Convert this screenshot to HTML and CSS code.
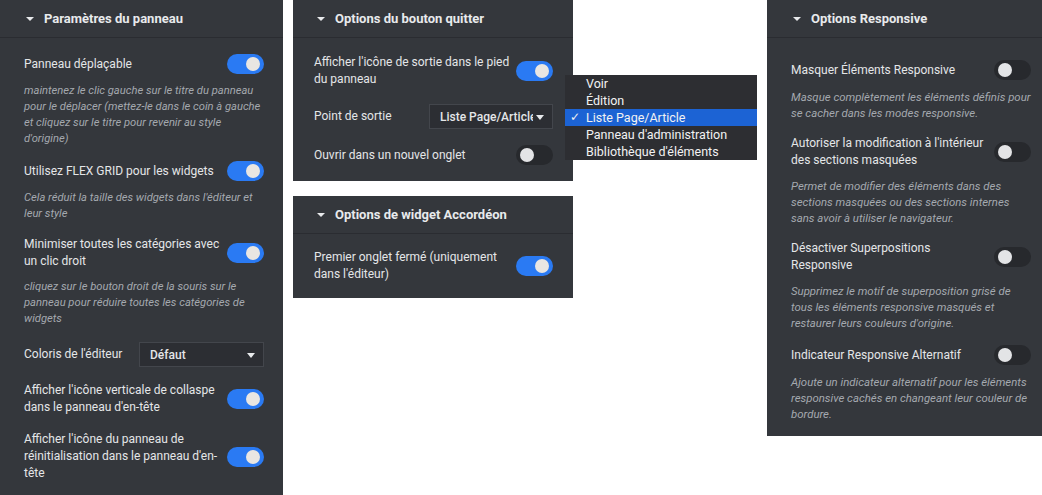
FILE: index.html
```html
<!DOCTYPE html>
<html lang="fr">
  <head>
    <meta charset="UTF-8" />
    <meta name="viewport" content="width=device-width, initial-scale=1.0" />
    <title>Réglages de l'éditeur</title>
    <link rel="stylesheet" href="styles.css">
  </head>
  <body>
    <div class="Board">
      <section class="Panel Panel--main">
        <header class="PanelHead"><span class="Caret"></span>Paramètres du panneau</header>
        <div class="PanelBody">
          <div class="Field">
            <div class="FieldRow">
              <span class="FieldLabel">Panneau déplaçable</span>
              <span class="Switch is-on"></span>
            </div>
            <p class="FieldDesc">maintenez le clic gauche sur le titre du panneau pour le déplacer (mettez-le dans le coin à gauche et cliquez sur le titre pour revenir au style d'origine)</p>
          </div>
          <div class="Field">
            <div class="FieldRow">
              <span class="FieldLabel">Utilisez FLEX GRID pour les widgets</span>
              <span class="Switch is-on"></span>
            </div>
            <p class="FieldDesc">Cela réduit la taille des widgets dans l'éditeur et leur style</p>
          </div>
          <div class="Field">
            <div class="FieldRow">
              <span class="FieldLabel">Minimiser toutes les catégories avec un clic droit</span>
              <span class="Switch is-on"></span>
            </div>
            <p class="FieldDesc">cliquez sur le bouton droit de la souris sur le panneau pour réduire toutes les catégories de widgets</p>
          </div>
          <div class="Field">
            <div class="FieldRow">
              <span class="FieldLabel">Coloris de l'éditeur</span>
              <span class="Select Select--wide"><span class="SelectValue">Défaut</span></span>
            </div>
          </div>
          <div class="Field">
            <div class="FieldRow">
              <span class="FieldLabel">Afficher l'icône verticale de collaspe dans le panneau d'en-tête</span>
              <span class="Switch is-on"></span>
            </div>
          </div>
          <div class="Field">
            <div class="FieldRow">
              <span class="FieldLabel">Afficher l'icône du panneau de réinitialisation dans le panneau d'en-tête</span>
              <span class="Switch is-on"></span>
            </div>
          </div>
        </div>
      </section>

      <div class="Stack">
        <section class="Panel Panel--mid">
          <header class="PanelHead"><span class="Caret"></span>Options du bouton quitter</header>
          <div class="PanelBody">
            <div class="Field">
              <div class="FieldRow">
                <span class="FieldLabel">Afficher l'icône de sortie dans le pied du panneau</span>
                <span class="Switch is-on"></span>
              </div>
            </div>
            <div class="Field">
              <div class="FieldRow">
                <span class="FieldLabel">Point de sortie</span>
                <span class="Select"><span class="SelectValue">Liste Page/Article</span></span>
              </div>
            </div>
            <div class="Field">
              <div class="FieldRow">
                <span class="FieldLabel">Ouvrir dans un nouvel onglet</span>
                <span class="Switch"></span>
              </div>
            </div>
          </div>
        </section>

        <section class="Panel Panel--mid Panel--short">
          <header class="PanelHead"><span class="Caret"></span>Options de widget Accordéon</header>
          <div class="PanelBody">
            <div class="Field">
              <div class="FieldRow">
                <span class="FieldLabel">Premier onglet fermé (uniquement dans l'éditeur)</span>
                <span class="Switch is-on"></span>
              </div>
            </div>
          </div>
        </section>

        <!-- open menu of the "Point de sortie" select -->
        <ul class="Menu">
          <li>Voir</li>
          <li>Édition</li>
          <li class="is-checked">Liste Page/Article</li>
          <li>Panneau d'administration</li>
          <li>Bibliothèque d'éléments</li>
        </ul>
      </div>

      <section class="Panel Panel--side">
        <header class="PanelHead"><span class="Caret"></span>Options Responsive</header>
        <div class="PanelBody">
          <div class="Field">
            <div class="FieldRow">
              <span class="FieldLabel">Masquer Éléments Responsive</span>
              <span class="Switch"></span>
            </div>
            <p class="FieldDesc">Masque complètement les éléments définis pour se cacher dans les modes responsive.</p>
          </div>
          <div class="Field">
            <div class="FieldRow">
              <span class="FieldLabel">Autoriser la modification à l'intérieur des sections masquées</span>
              <span class="Switch"></span>
            </div>
            <p class="FieldDesc">Permet de modifier des éléments dans des sections masquées ou des sections internes sans avoir à utiliser le navigateur.</p>
          </div>
          <div class="Field">
            <div class="FieldRow">
              <span class="FieldLabel">Désactiver Superpositions Responsive</span>
              <span class="Switch"></span>
            </div>
            <p class="FieldDesc">Supprimez le motif de superposition grisé de tous les éléments responsive masqués et restaurer leurs couleurs d'origine.</p>
          </div>
          <div class="Field">
            <div class="FieldRow">
              <span class="FieldLabel">Indicateur Responsive Alternatif</span>
              <span class="Switch"></span>
            </div>
            <p class="FieldDesc">Ajoute un indicateur alternatif pour les éléments responsive cachés en changeant leur couleur de bordure.</p>
          </div>
        </div>
      </section>
    </div>
  </body>
</html>
```

FILE: styles.css
```css
:root {
  --panel-bg: #34373c;
  --panel-line: #2a2c31;
  --text: #e4e6e8;
  --text-muted: #a4a9af;
  --accent: #2a7af3;
  --field-bg: #2c2e33;
}

body {
  margin: 0;
  background-color: #fff;
  font-family: Roboto, "Noto Sans", sans-serif;
  color: var(--text);
}

.Board {
  display: flex;
  align-items: flex-start;
  gap: 10px;
  width: 1042px;
  height: 495px;
  overflow: hidden;
}

.Panel {
  background-color: var(--panel-bg);
}
.Panel--main {
  width: 283px;
  height: 495px;
}
.Panel--main .PanelBody {
  padding: 16px 19px 16px 24px;
}
.Panel--mid {
  width: 280px;
}
.Panel--mid .PanelBody {
  padding: 16px 20px 16px 21px;
  gap: 16px;
}
.Panel--short .PanelBody {
  padding-top: 15px;
  padding-bottom: 15px;
}
.Panel--side {
  width: 275px;
  margin-left: auto;
}
.Panel--side .PanelBody {
  padding: 22px 11px 14px 24px;
}
.Panel--side .FieldDesc {
  font-size: 11.4px;
}

.Stack {
  position: relative;
  display: flex;
  flex-direction: column;
  gap: 15px;
}

.PanelHead {
  display: flex;
  align-items: center;
  gap: 10px;
  height: 37px;
  padding-left: 26px;
  border-bottom: 1px solid var(--panel-line);
  font-size: 13px;
  font-weight: 700;
  color: #e8eaec;
}
.Panel--mid .PanelHead {
  padding-left: 24px;
}

.Caret {
  width: 0;
  height: 0;
  border-left: 4px solid transparent;
  border-right: 4px solid transparent;
  border-top: 4px solid #e8eaec;
}

.PanelBody {
  display: flex;
  flex-direction: column;
  gap: 14px;
}
.Panel--main .Field:nth-child(n+4) {
  margin-top: 1px;
}

.FieldRow {
  display: flex;
  align-items: center;
  gap: 6px;
  min-height: 20px;
}
.FieldLabel {
  flex: 1;
  font-size: 12px;
  line-height: 17px;
}
.FieldDesc {
  margin: 9px 0 0;
  font-size: 11.2px;
  line-height: 16px;
  font-style: italic;
  color: var(--text-muted);
}

/* toggle switch */
.Switch {
  position: relative;
  flex: none;
  width: 37px;
  height: 20px;
  border-radius: 10px;
  background-color: #27292d;
}
.Switch::after {
  content: "";
  position: absolute;
  top: 3px;
  left: 4px;
  width: 14px;
  height: 14px;
  border-radius: 50%;
  background-color: #e3e4e6;
}
.Switch.is-on {
  background-color: var(--accent);
}
.Switch.is-on::after {
  left: auto;
  right: 4px;
  background-color: #e9e6e2;
}

/* closed select */
.Select {
  position: relative;
  flex: none;
  display: flex;
  align-items: center;
  box-sizing: border-box;
  width: 124px;
  height: 25px;
  padding: 0 22px 0 10px;
  border: 1px solid #43464c;
  background-color: var(--field-bg);
  font-size: 12px;
  font-weight: 500;
  overflow: hidden;
}
.Select--wide {
  width: 125px;
}
.SelectValue {
  white-space: nowrap;
}
.Select::after {
  content: "";
  position: absolute;
  right: 8px;
  top: 10px;
  border-left: 4px solid transparent;
  border-right: 4px solid transparent;
  border-top: 5px solid #e8eaec;
}
.Select:not(.Select--wide) {
  padding-right: 0;
}
.Select:not(.Select--wide)::before {
  content: "";
  position: absolute;
  right: 0;
  top: 0;
  bottom: 0;
  width: 19px;
  background-color: var(--field-bg);
}

/* dropdown menu */
.Menu {
  position: absolute;
  left: 272px;
  top: 75px;
  width: 192px;
  margin: 0;
  padding: 0;
  list-style: none;
  background-color: #2d2e32;
  font-size: 12.5px;
  color: #f2f2f2;
}
.Menu li {
  height: 17px;
  line-height: 17px;
  padding-left: 21px;
  position: relative;
}
.Menu li.is-checked {
  background-color: #1c63d4;
}
.Menu li.is-checked::before {
  content: "✓";
  position: absolute;
  left: 5px;
  font-family: "DejaVu Sans", sans-serif;
  font-size: 12px;
}
```
